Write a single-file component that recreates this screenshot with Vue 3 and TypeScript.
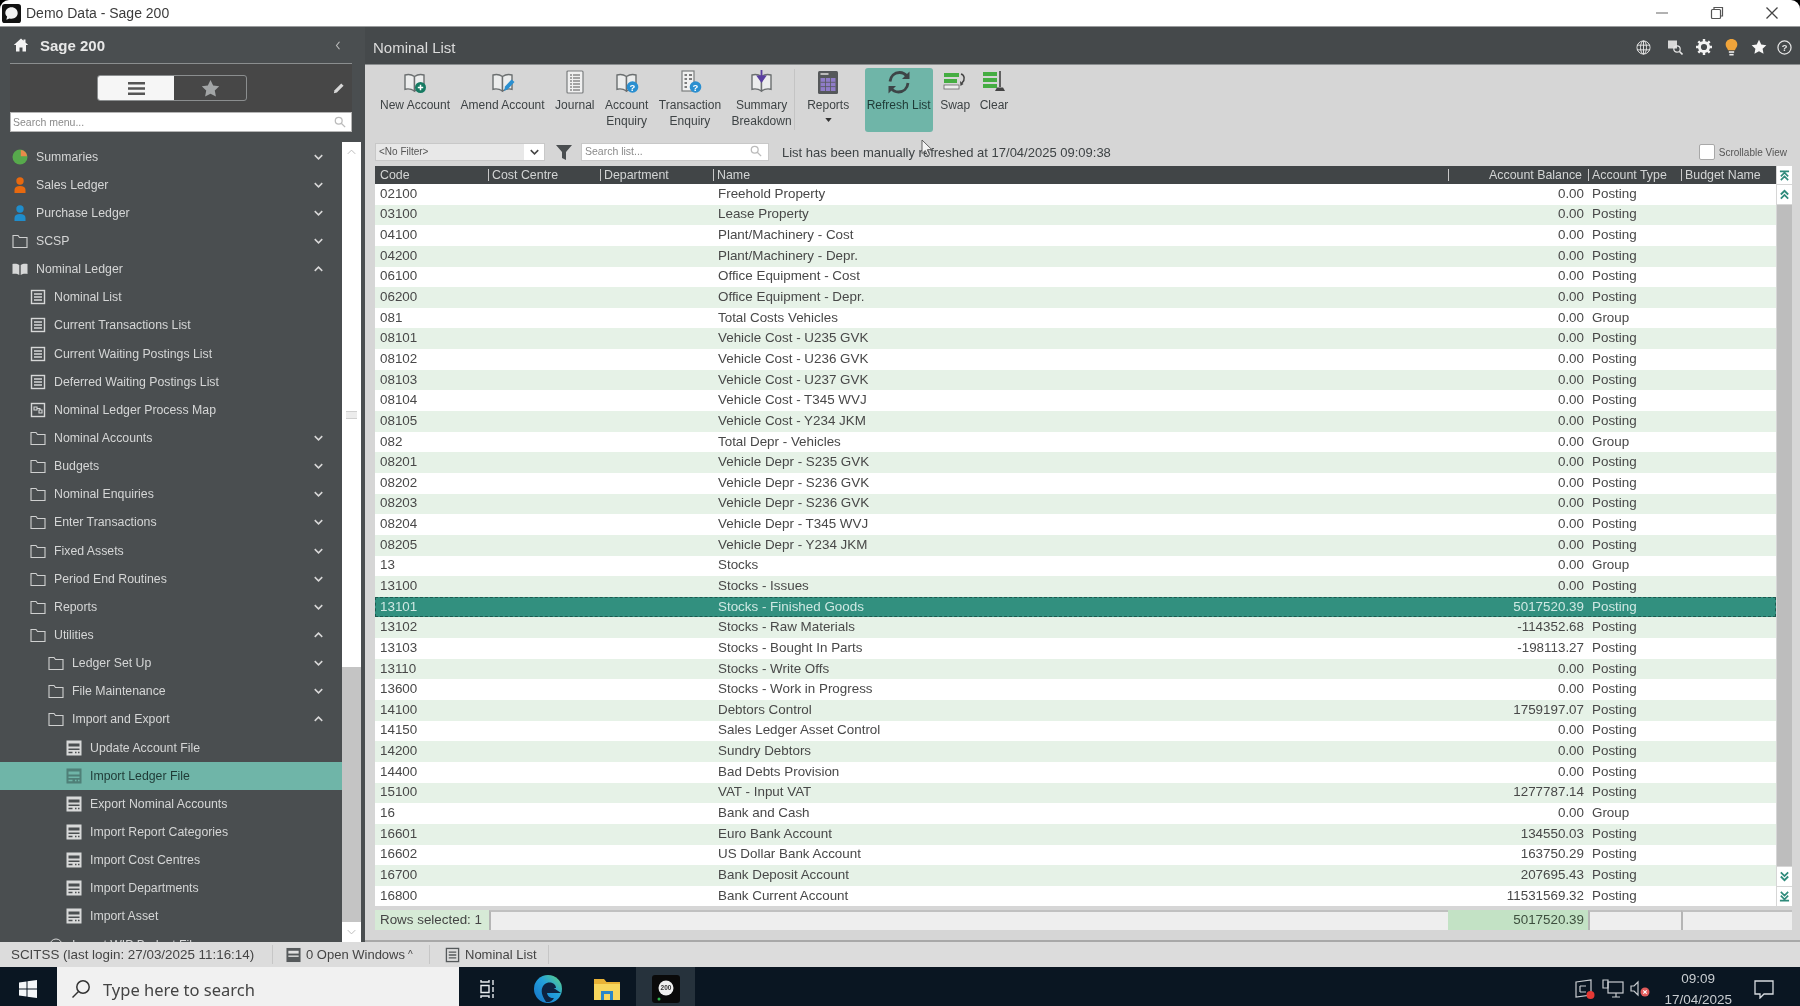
<script setup lang="ts">
// Sage 200 - Nominal List desktop window
type MenuIcon = "pie" | "sales" | "purchase" | "folder" | "book" | "doc" | "form" | "map" | "round"
interface MenuItem {
  label: string
  level: number
  icon: MenuIcon
  arrow?: "up" | "down"
  active?: boolean
}
interface Account {
  code: string
  name: string
  balance?: string
  type?: string
}

const menu: MenuItem[] = [
  { label: "Summaries", level: 0, icon: "pie", arrow: "down" },
  { label: "Sales Ledger", level: 0, icon: "sales", arrow: "down" },
  { label: "Purchase Ledger", level: 0, icon: "purchase", arrow: "down" },
  { label: "SCSP", level: 0, icon: "folder", arrow: "down" },
  { label: "Nominal Ledger", level: 0, icon: "book", arrow: "up" },
  { label: "Nominal List", level: 1, icon: "doc" },
  { label: "Current Transactions List", level: 1, icon: "doc" },
  { label: "Current Waiting Postings List", level: 1, icon: "doc" },
  { label: "Deferred Waiting Postings List", level: 1, icon: "doc" },
  { label: "Nominal Ledger Process Map", level: 1, icon: "map" },
  { label: "Nominal Accounts", level: 1, icon: "folder", arrow: "down" },
  { label: "Budgets", level: 1, icon: "folder", arrow: "down" },
  { label: "Nominal Enquiries", level: 1, icon: "folder", arrow: "down" },
  { label: "Enter Transactions", level: 1, icon: "folder", arrow: "down" },
  { label: "Fixed Assets", level: 1, icon: "folder", arrow: "down" },
  { label: "Period End Routines", level: 1, icon: "folder", arrow: "down" },
  { label: "Reports", level: 1, icon: "folder", arrow: "down" },
  { label: "Utilities", level: 1, icon: "folder", arrow: "up" },
  { label: "Ledger Set Up", level: 2, icon: "folder", arrow: "down" },
  { label: "File Maintenance", level: 2, icon: "folder", arrow: "down" },
  { label: "Import and Export", level: 2, icon: "folder", arrow: "up" },
  { label: "Update Account File", level: 3, icon: "form" },
  { label: "Import Ledger File", level: 3, icon: "form", active: true },
  { label: "Export Nominal Accounts", level: 3, icon: "form" },
  { label: "Import Report Categories", level: 3, icon: "form" },
  { label: "Import Cost Centres", level: 3, icon: "form" },
  { label: "Import Departments", level: 3, icon: "form" },
  { label: "Import Asset", level: 3, icon: "form" },
  // only the top of this one shows above the status bar
  { label: "Import WIP Budget File", level: 2, icon: "round" },
]

const tools = [
  { id: "new", lines: ["New Account"] },
  { id: "amend", lines: ["Amend Account"] },
  { id: "journal", lines: ["Journal"] },
  { id: "accEnq", lines: ["Account", "Enquiry"] },
  { id: "trnEnq", lines: ["Transaction", "Enquiry"] },
  { id: "summary", lines: ["Summary", "Breakdown"] },
  { id: "reports", lines: ["Reports"] },
  { id: "refresh", lines: ["Refresh List"] },
  { id: "swap", lines: ["Swap"] },
  { id: "clear", lines: ["Clear"] },
]

const columns = [
  { label: "Code" },
  { label: "Cost Centre" },
  { label: "Department" },
  { label: "Name" },
  { label: "Account Balance", right: true },
  { label: "Account Type" },
  { label: "Budget Name" },
]

const accounts: Account[] = [
  { code: "02100", name: "Freehold Property" },
  { code: "03100", name: "Lease Property" },
  { code: "04100", name: "Plant/Machinery - Cost" },
  { code: "04200", name: "Plant/Machinery - Depr." },
  { code: "06100", name: "Office Equipment - Cost" },
  { code: "06200", name: "Office Equipment - Depr." },
  { code: "081", name: "Total Costs Vehicles", type: "Group" },
  { code: "08101", name: "Vehicle Cost - U235 GVK" },
  { code: "08102", name: "Vehicle Cost - U236 GVK" },
  { code: "08103", name: "Vehicle Cost - U237 GVK" },
  { code: "08104", name: "Vehicle Cost - T345 WVJ" },
  { code: "08105", name: "Vehicle Cost - Y234 JKM" },
  { code: "082", name: "Total Depr - Vehicles", type: "Group" },
  { code: "08201", name: "Vehicle Depr - S235 GVK" },
  { code: "08202", name: "Vehicle Depr - S236 GVK" },
  { code: "08203", name: "Vehicle Depr - S236 GVK" },
  { code: "08204", name: "Vehicle Depr - T345 WVJ" },
  { code: "08205", name: "Vehicle Depr - Y234 JKM" },
  { code: "13", name: "Stocks", type: "Group" },
  { code: "13100", name: "Stocks - Issues" },
  { code: "13101", name: "Stocks - Finished Goods", balance: "5017520.39" },
  { code: "13102", name: "Stocks - Raw Materials", balance: "-114352.68" },
  { code: "13103", name: "Stocks - Bought In Parts", balance: "-198113.27" },
  { code: "13110", name: "Stocks - Write Offs" },
  { code: "13600", name: "Stocks - Work in Progress" },
  { code: "14100", name: "Debtors Control", balance: "1759197.07" },
  { code: "14150", name: "Sales Ledger Asset Control" },
  { code: "14200", name: "Sundry Debtors" },
  { code: "14400", name: "Bad Debts Provision" },
  { code: "15100", name: "VAT - Input VAT", balance: "1277787.14" },
  { code: "16", name: "Bank and Cash", type: "Group" },
  { code: "16601", name: "Euro Bank Account", balance: "134550.03" },
  { code: "16602", name: "US Dollar Bank Account", balance: "163750.29" },
  { code: "16700", name: "Bank Deposit Account", balance: "207695.43" },
  { code: "16800", name: "Bank Current Account", balance: "11531569.32" },
]
</script>

<template>
  <div class="app">
    <div class="titlebar">
      <svg class="app-logo" viewBox="0 0 20 20">
        <rect width="20" height="20" rx="3" fill="#111" />
        <path d="M10 3.500c3.800 0 6.500 2.600 6.500 6s-2.700 6-6.500 6c-.8 0-1.500-.1-2.200-.3L4.600 16.500l.8-3.300C4 12.100 3.500 10.800 3.500 9.500c0-3.400 2.700-6 6.500-6z" fill="#f2f2f2" />
      </svg>
      <span class="title-text">Demo Data - Sage 200</span>
      <div class="win-controls">
        <svg viewBox="0 0 14 14" width="14" height="14"><path d="M1 7h12" stroke="#999" stroke-width="1.500" /></svg>
        <svg viewBox="0 0 14 14" width="14" height="14" fill="none" stroke="#555" stroke-width="1.200">
          <rect x="1.500" y="3.500" width="9" height="9" rx="1" />
          <path d="M4 3.500V1.500h8.500v8.500h-2" />
        </svg>
        <svg viewBox="0 0 14 14" width="14" height="14"><path d="M1.500 1.500l11 11M12.500 1.500l-11 11" stroke="#444" stroke-width="1.300" /></svg>
      </div>
    </div>

    <div class="main">
      <aside class="sidebar">
        <div class="side-head">
          <svg class="home" viewBox="0 0 16 16" width="16" height="16">
            <path d="M8 1.500L0.800 8h2.200v6.500h3.500v-4h3v4h3.500V8h2.200l-2.700-2.400V2.500h-2v1.300z" fill="#f4f4f4" />
          </svg>
          <span class="side-title">Sage 200</span>
          <svg class="collapse" viewBox="0 0 8 12" width="6" height="9"><path d="M6 1L2 6l4 5" fill="none" stroke="#bbb" stroke-width="1.500" /></svg>
        </div>
        <div class="side-tabs">
          <div class="tabs">
            <div class="tab tab-on">
              <svg viewBox="0 0 16 14" width="17" height="15"><path d="M0 2h16M0 7h16M0 12h16" stroke="#555" stroke-width="2.400" /></svg>
            </div>
            <div class="tab">
              <svg viewBox="0 0 20 20" width="19" height="19"><path d="M10 1l2.800 5.900 6.400.8-4.700 4.400 1.200 6.400L10 15.400l-5.700 3.100 1.200-6.400L.8 7.700l6.400-.8z" fill="#a2a5a6" /></svg>
            </div>
          </div>
          <svg class="pencil" viewBox="0 0 14 14" width="12" height="12"><path d="M1 13l.8-3.500L9.600 1.700l2.700 2.700-7.800 7.800z" fill="#d8d8d8" /></svg>
        </div>
        <div class="side-search">
          <span>Search menu...</span>
          <svg viewBox="0 0 14 14" width="12" height="12" fill="none" stroke="#bbb" stroke-width="1.500"><circle cx="5.500" cy="5.500" r="4" /><path d="M8.500 8.500l4.500 4.500" /></svg>
        </div>

        <div class="side-body">
          <ul class="menu">
            <li
              v-for="item in menu"
              :key="item.label"
              class="menu-row"
              :class="['lvl' + item.level, { 'menu-row--active': item.active }]"
            >
              <svg class="menu-icon" viewBox="0 0 16 16" width="16" height="16">
                <template v-if="item.icon === 'pie'">
                  <circle cx="8" cy="8" r="7.500" fill="#57a94c" />
                  <path d="M8.800 1v6.200H15C14.700 3.800 12.200 1.300 8.800 1z" fill="#e8894a" />
                </template>
                <template v-else-if="item.icon === 'sales' || item.icon === 'purchase'">
                  <g :fill="item.icon === 'sales' ? '#e8690f' : '#1f8dcc'">
                    <circle cx="8" cy="4" r="3.700" />
                    <path d="M2.500 16v-3c0-2.500 2-4 5.500-4s5.500 1.500 5.500 4v3z" />
                  </g>
                </template>
                <path v-else-if="item.icon === 'folder'" d="M1 14.500V2.500h5l1.500 2h7.500v10z" fill="none" stroke="#cfd0d0" stroke-width="1.100" />
                <g v-else-if="item.icon === 'book'" fill="#d6d7d7">
                  <path d="M.5 3c2.500-.7 5-.3 6.800 1v10c-1.800-1.200-4.300-1.600-6.800-1z" />
                  <path d="M15.500 3c-2.500-.7-5-.3-6.800 1v10c1.800-1.200 4.300-1.600 6.800-1z" />
                </g>
                <g v-else-if="item.icon === 'doc'">
                  <rect x="1.500" y="1.500" width="13" height="13" fill="none" stroke="#d6d7d7" stroke-width="1.400" />
                  <path d="M4 5h8M4 8h8M4 11h8" stroke="#d6d7d7" stroke-width="1.300" />
                </g>
                <g v-else-if="item.icon === 'map'">
                  <rect x="1.500" y="1.500" width="13" height="13" fill="none" stroke="#d6d7d7" stroke-width="1.400" />
                  <path d="M4 5h3v3H4zM9 8h3v3H9zM7 6.500h3v1.500" fill="none" stroke="#d6d7d7" stroke-width="1.100" />
                </g>
                <circle v-else-if="item.icon === 'round'" cx="8" cy="8" r="6" fill="none" stroke="#d6d7d7" />
                <g v-else>
                  <rect x="0.500" y="0.500" width="15" height="15" :fill="item.active ? '#4f7f77' : '#d8d9d9'" />
                  <rect x="2.500" y="3.500" width="11" height="3" :fill="item.active ? '#6fb5a8' : '#4a4e50'" />
                  <rect x="2.500" y="8.500" width="11" height="1.500" :fill="item.active ? '#6fb5a8' : '#4a4e50'" />
                  <path d="M2.500 12.500h4M9 12.500h1.500M12 12.500h1.500" :stroke="item.active ? '#6fb5a8' : '#4a4e50'" stroke-width="1.400" />
                </g>
              </svg>
              <span class="menu-label">{{ item.label }}</span>
              <svg v-if="item.arrow" class="menu-arrow" viewBox="0 0 12 8" width="9" height="6">
                <path :d="item.arrow === 'down' ? 'M1 1.500l5 5 5-5' : 'M1 6.500l5-5 5 5'" fill="none" stroke="#d8d8d8" stroke-width="2" />
              </svg>
            </li>
          </ul>
          <div class="side-scroll">
            <div class="ss-btn">
              <svg viewBox="0 0 12 8" width="9" height="6"><path d="M1 6.500l5-5 5 5" fill="none" stroke="#bbb" stroke-width="1.300" /></svg>
            </div>
            <div class="ss-thumb"><span class="ss-grip"></span></div>
            <div class="ss-track"></div>
            <div class="ss-btn">
              <svg viewBox="0 0 12 8" width="9" height="6"><path d="M1 1.500l5 5 5-5" fill="none" stroke="#bbb" stroke-width="1.300" /></svg>
            </div>
          </div>
        </div>
      </aside>

      <section class="content">
        <header class="content-head">
          <span class="content-title">Nominal List</span>
          <div class="head-icons">
            <svg class="ic-globe" viewBox="0 0 16 16" width="15" height="15" fill="none" stroke="#e6e6e6" stroke-width="1">
              <circle cx="8" cy="8" r="7" /><ellipse cx="8" cy="8" rx="3.200" ry="7" /><path d="M1 5.500h14M1 10.500h14M8 1v14" />
            </svg>
            <svg viewBox="0 0 16 16" width="16" height="16" fill="none" stroke="#e6e6e6" stroke-width="1.200">
              <rect x="1" y="1.500" width="9" height="8" fill="#d8d8d8" stroke="none" />
              <circle cx="10" cy="10" r="3.200" /><path d="M12.500 12.500l3 3" stroke-width="1.600" />
            </svg>
            <svg viewBox="0 0 16 16" width="16" height="16">
              <circle cx="8" cy="8" r="4.600" fill="none" stroke="#f2f2f2" stroke-width="3" />
              <path d="M8 0v3M8 13v3M0 8h3M13 8h3M2.300 2.300l2.100 2.100M11.600 11.600l2.100 2.100M2.300 13.700l2.100-2.100M11.600 4.400l2.100-2.100" stroke="#f2f2f2" stroke-width="2.400" />
            </svg>
            <svg viewBox="0 0 12 16" width="13" height="17">
              <path d="M6 0C2.700 0 .5 2.300.5 5.200c0 2.400 1.600 3.500 2.300 5.300h6.400c.7-1.800 2.300-2.900 2.300-5.300C11.500 2.300 9.300 0 6 0z" fill="#f0a43a" />
              <rect x="3.500" y="11.500" width="5" height="1.500" fill="#eee" /><rect x="4" y="14" width="4" height="1.500" fill="#eee" />
            </svg>
            <svg viewBox="0 0 20 20" width="16" height="16"><path d="M10 1l2.800 5.900 6.400.8-4.700 4.400 1.200 6.400L10 15.400l-5.700 3.100 1.200-6.400L.8 7.700l6.400-.8z" fill="#f6f6f6" /></svg>
            <svg class="ic-help" viewBox="0 0 16 16" width="15" height="15">
              <circle cx="8" cy="8" r="7" fill="none" stroke="#e6e6e6" stroke-width="1.300" />
              <text x="8" y="11.600" font-size="10" font-family="Liberation Sans, sans-serif" font-weight="700" text-anchor="middle" fill="#e6e6e6">?</text>
            </svg>
          </div>
        </header>

        <div class="panel">
          <div class="toolbar">
            <div
              v-for="t in tools"
              :key="t.id"
              class="tool"
              :class="['tool-' + t.id, { 'tool--on': t.id === 'refresh' }]"
            >
              <svg class="tool-icon" viewBox="0 0 24 24" width="24" height="24">
                <template v-if="t.id === 'new' || t.id === 'amend' || t.id === 'accEnq' || t.id === 'summary'">
                  <path d="M2 5c3-1 6.500-.6 9.500 1.500V21C8.500 19 5 18.500 2 19.300z" fill="#eceded" stroke="#6b6f70" stroke-width="1.400" />
                  <path d="M21 5c-3-1-6.500-.6-9.500 1.500V21c3-2 6.500-2.500 9.500-1.700z" fill="#eceded" stroke="#6b6f70" stroke-width="1.400" />
                </template>
                <template v-if="t.id === 'new'">
                  <circle cx="17.500" cy="17.500" r="5.500" fill="#167a62" />
                  <path d="M14.800 17.500h5.400M17.500 14.800v5.400" stroke="#fff" stroke-width="1.500" />
                </template>
                <path v-if="t.id === 'amend'" d="M13 21l1-4.500 6.500-7 3 2.500-6.500 7z" fill="#2a8fd0" />
                <template v-if="t.id === 'journal'">
                  <rect x="4" y="1" width="16" height="22" rx="1" fill="#f0f0f0" stroke="#7a7d7e" stroke-width="1.200" />
                  <path d="M7 5h10M7 8h10M7 11h10M7 14h10M7 17h10M7 20h10" stroke="#555" stroke-width="1.200" />
                  <path d="M9.500 3v19" stroke="#f0f0f0" stroke-width="1" />
                </template>
                <template v-if="t.id === 'accEnq' || t.id === 'trnEnq'">
                  <rect v-if="t.id === 'trnEnq'" x="4" y="1" width="12" height="20" fill="#f0f0f0" stroke="#7a7d7e" stroke-width="1.200" />
                  <path v-if="t.id === 'trnEnq'" d="M6.500 5h2.500M11 5h3M6.500 9h2.500M11 9h3M6.500 13h2.500M6.500 17h2.500" stroke="#555" stroke-width="1.400" />
                  <circle cx="17.500" cy="17" r="5.800" fill="#2a8fd0" />
                  <text x="17.500" y="20.500" font-size="9.500" font-family="Liberation Sans, sans-serif" font-weight="700" text-anchor="middle" fill="#fff">?</text>
                </template>
                <path v-if="t.id === 'summary'" d="M11.500 0v9M8 6.500l3.500 5 3.500-5z" fill="#5a3fa0" stroke="#5a3fa0" stroke-width="1.800" />
                <template v-if="t.id === 'reports'">
                  <rect x="2" y="1" width="20" height="23" rx="1.500" fill="#55585a" />
                  <rect x="4.500" y="3" width="8" height="2" fill="#bbb" />
                  <rect x="4.500" y="8" width="15" height="13" fill="#8f7cc8" />
                  <path d="M4.500 12.300h15M4.500 16.600h15M9.500 8v13M14.500 8v13" stroke="#55585a" stroke-width=".8" />
                </template>
                <template v-if="t.id === 'refresh'">
                  <path d="M3 11.500C3.600 6 7.500 2.500 12.500 2.500c3.300 0 5.800 1.500 7.500 4" fill="none" stroke="#3d4547" stroke-width="2.800" />
                  <path d="M22.500 1.500v7.500H15z" fill="#3d4547" />
                  <path d="M21 13c-.6 5.500-4.500 9-9.500 9-3.300 0-5.800-1.500-7.500-4" fill="none" stroke="#3d4547" stroke-width="2.800" />
                  <path d="M1.500 23.500v-7.500H9z" fill="#3d4547" />
                </template>
                <template v-if="t.id === 'swap'">
                  <rect x="1" y="3" width="15" height="4" fill="#45ad42" />
                  <rect x="1" y="9" width="13" height="4" fill="#45ad42" />
                  <rect x="1" y="15" width="15" height="4" fill="#eee" stroke="#666" stroke-width=".8" />
                  <path d="M18 4c3.500 1 4.500 5.500 1 9" fill="none" stroke="#444" stroke-width="1.500" />
                  <path d="M17 11l3.500 3-3 2z" fill="#444" />
                </template>
                <template v-if="t.id === 'clear'">
                  <rect x="1" y="2" width="14" height="4" fill="#45ad42" />
                  <rect x="1" y="8" width="14" height="4" fill="#45ad42" />
                  <rect x="1" y="14" width="14" height="4" fill="#45ad42" />
                  <path d="M18 1v16" stroke="#444" stroke-width="1.600" />
                  <path d="M13 21l2-3.500h6l2 3.500z" fill="#444" />
                </template>
              </svg>
              <span v-for="l in t.lines" :key="l" class="tool-line">{{ l }}</span>
              <svg v-if="t.id === 'reports'" class="tool-caret" viewBox="0 0 8 5" width="7" height="4"><path d="M0 0h8L4 5z" fill="#333" /></svg>
            </div>
          </div>

          <div class="filter-row">
            <div class="filter-select">
              <span class="filter-value">&lt;No Filter&gt;</span>
              <span class="filter-arrow">
                <svg viewBox="0 0 12 8" width="9" height="6"><path d="M1 1.500l5 5 5-5" fill="none" stroke="#444" stroke-width="2" /></svg>
              </span>
            </div>
            <svg class="funnel" viewBox="0 0 16 16" width="16" height="16"><path d="M0 1h16l-6 7v8l-4-2V8z" fill="#4a4e50" /></svg>
            <div class="list-search">
              <span>Search list...</span>
              <svg viewBox="0 0 14 14" width="12" height="12" fill="none" stroke="#bbb" stroke-width="1.500"><circle cx="5.500" cy="5.500" r="4" /><path d="M8.500 8.500l4.500 4.500" /></svg>
            </div>
            <span class="refresh-msg">List has been manually refreshed at 17/04/2025 09:09:38</span>
            <label class="scrollable">
              <span class="check"></span>
              <span>Scrollable View</span>
            </label>
          </div>

          <div class="grid-wrap">
            <div class="grid">
              <div class="grid-head">
                <div
                  v-for="(c, i) in columns"
                  :key="c.label"
                  class="hcell"
                  :class="{ 'hcell--right': c.right, 'hcell--first': i === 0 }"
                >
                  {{ c.label }}
                </div>
              </div>
              <div
                v-for="(a, i) in accounts"
                :key="a.code"
                class="grid-row"
                :class="{ 'grid-row--alt': i % 2 === 1, 'grid-row--sel': a.code === '13101' }"
              >
                <div class="cell cell-code">{{ a.code }}</div>
                <div class="cell"></div>
                <div class="cell"></div>
                <div class="cell cell-name">{{ a.name }}</div>
                <div class="cell cell-bal">{{ a.balance ?? '0.00' }}</div>
                <div class="cell cell-type">{{ a.type ?? 'Posting' }}</div>
                <div class="cell"></div>
              </div>
            </div>
            <div class="grid-scroll">
              <div class="gs-btn gs-btn--head">
                <svg viewBox="0 0 12 12" width="11" height="11" fill="none" stroke="#2f8b7b" stroke-width="1.800"><path d="M1 1.500h10M2 7l4-4 4 4M2 11l4-4 4 4" /></svg>
              </div>
              <div class="gs-btn">
                <svg viewBox="0 0 12 12" width="11" height="11" fill="none" stroke="#2f8b7b" stroke-width="2"><path d="M2 6l4-4 4 4M2 10.500l4-4 4 4" /></svg>
              </div>
              <div class="gs-track"></div>
              <div class="gs-btn">
                <svg viewBox="0 0 12 12" width="11" height="11" fill="none" stroke="#2f8b7b" stroke-width="2"><path d="M2 1.500l4 4 4-4M2 6l4 4 4-4" /></svg>
              </div>
              <div class="gs-btn">
                <svg viewBox="0 0 12 12" width="11" height="11" fill="none" stroke="#2f8b7b" stroke-width="1.800"><path d="M2 1l4 4 4-4M2 5l4 4 4-4M1 10.500h10" /></svg>
              </div>
            </div>
          </div>

          <div class="totals">
            <div class="tot tot-label">Rows selected: 1</div>
            <div class="tot tot-fill"></div>
            <div class="tot tot-sum">5017520.39</div>
            <div class="tot tot-a"></div>
            <div class="tot tot-b"></div>
          </div>

          <!-- mouse pointer captured over the toolbar -->
          <svg class="pointer" viewBox="0 0 11 18" width="11" height="18">
            <path d="M1 1v13.500l3.300-3 2.300 5.200 2-.9-2.300-5.100 4.400-.2z" fill="#f4f4f4" stroke="#555" stroke-width=".9" />
          </svg>
        </div>
      </section>
    </div>

    <footer class="statusbar">
      <span class="st-item st-user">SCITSS (last login: 27/03/2025 11:16:14)</span>
      <span class="st-item st-windows">
        <svg viewBox="0 0 16 16" width="15" height="16">
          <rect x="0.500" y="0.500" width="15" height="15" fill="#55595b" />
          <rect x="2.500" y="3.500" width="11" height="3" fill="#e0e0e0" /><rect x="2.500" y="8.500" width="11" height="1.500" fill="#e0e0e0" />
        </svg>
        0 Open Windows <sup>^</sup>
      </span>
      <span class="st-item st-list">
        <svg viewBox="0 0 16 16" width="15" height="16" fill="none" stroke="#55595b" stroke-width="1.400">
          <rect x="1.500" y="1" width="13" height="14" /><path d="M4 5h8M4 8h8M4 11h8" />
        </svg>
        Nominal List
      </span>
    </footer>

    <div class="taskbar">
      <div class="start">
        <svg viewBox="0 0 18 18" width="18" height="18"><path d="M0 2.500L7.500 1.400v7.100H0zM8.500 1.300L18 0v8.500H8.500zM0 9.500h7.500v7.100L0 15.500zM8.500 9.500H18V18l-9.500-1.300z" fill="#f4f6f8" /></svg>
      </div>
      <div class="task-search">
        <svg viewBox="0 0 20 20" width="20" height="20" fill="none" stroke="#333" stroke-width="1.500"><circle cx="12" cy="8" r="6.200" /><path d="M7.500 12.500L1.500 18.500" /></svg>
        <span>Type here to search</span>
      </div>
      <div class="task-apps">
        <div class="task-app">
          <svg viewBox="0 0 20 20" width="20" height="20" fill="none" stroke="#e8ecef" stroke-width="1.400"><path d="M2 1v2h8V1M2 6.500h8v7H2zM2 19v-2h8v2M14 1v5M14 8v5M14 15v4" /></svg>
        </div>
        <div class="task-app">
          <svg viewBox="0 0 30 30" width="30" height="30">
            <defs>
              <linearGradient id="edge-ring" x1="0" y1="1" x2="1" y2="0">
                <stop offset="0" stop-color="#1570c4" />
                <stop offset="0.55" stop-color="#23a0dc" />
                <stop offset="1" stop-color="#62d67c" />
              </linearGradient>
            </defs>
            <circle cx="15" cy="15" r="14" fill="url(#edge-ring)" />
            <path d="M28 19H14c.5 3.500 3.600 5.200 7 5.200-2 3-5 4.300-8 3.800C12 26 8 21 8.800 15.500 9.600 11 13 8.500 16.500 8.500c4 0 6.500 2.500 6.500 5.500H15c.5-1.200 1.500-2 2.800-2" fill="#0e2340" />
          </svg>
        </div>
        <div class="task-app">
          <svg viewBox="0 0 28 22" width="28" height="22">
            <path d="M1 1h10l2.500 3H27v18H1z" fill="#e8b236" />
            <rect x="1" y="6" width="26" height="16" fill="#f7d65d" />
            <rect x="8" y="13" width="12" height="9" fill="#2a86c8" />
            <rect x="11" y="16" width="6" height="6" fill="#f7d65d" />
          </svg>
        </div>
        <div class="task-app task-app--on">
          <svg viewBox="0 0 28 28" width="28" height="28">
            <rect width="28" height="28" rx="3" fill="#0a0a0a" />
            <circle cx="14" cy="13" r="7.500" fill="#f0f0f0" />
            <text x="14" y="15.300" font-size="6.500" font-family="Liberation Sans, sans-serif" font-weight="700" text-anchor="middle" fill="#333">200</text>
            <circle cx="7" cy="24" r="1.500" fill="#2fb34a" />
          </svg>
        </div>
      </div>
      <div class="tray">
        <svg class="tray-ic" viewBox="0 0 22 22" width="22" height="22" fill="none" stroke="#c8ccd0" stroke-width="1.200">
          <path d="M2 4l15-2v15L2 19z" /><path d="M6 8h6M6 14h6M6 8v6" />
          <circle cx="16.500" cy="17" r="4" fill="#e53935" stroke="none" />
        </svg>
        <svg class="tray-ic" viewBox="0 0 22 22" width="22" height="22" fill="none" stroke="#c8ccd0" stroke-width="1.200">
          <rect x="6" y="4" width="15" height="11" /><path d="M10 19h8M14 15v4M1 2h5v8H1z" />
        </svg>
        <svg class="tray-ic" viewBox="0 0 22 22" width="22" height="22" fill="none" stroke="#c8ccd0" stroke-width="1.200">
          <path d="M1 8h3l4-4v13l-4-4H1z" />
          <circle cx="15" cy="14" r="4.500" fill="#e25c5c" stroke="none" />
          <path d="M13.300 12.300l3.400 3.400M16.700 12.300l-3.400 3.400" stroke="#fff" />
        </svg>
        <div class="clock">
          <span>09:09</span>
          <span>17/04/2025</span>
        </div>
        <svg class="notify" viewBox="0 0 20 20" width="20" height="20" fill="none" stroke="#d8dce0" stroke-width="1.300">
          <path d="M1 2h18v13h-9l-4 4v-4H1z" />
        </svg>
      </div>
    </div>
  </div>
</template>

<style scoped>
.app {
  width: 1800px;
  height: 1006px;
  display: flex;
  flex-direction: column;
  overflow: hidden;
  font-family: "Liberation Sans", Arial, sans-serif;
  background: #000;
  /* the reference is a video still, everything in it is slightly soft */
  filter: blur(0.45px);
}

.titlebar {
  height: 27px;
  flex: none;
  display: flex;
  align-items: center;
  background: #fff;
  border-bottom: 1px solid #9a9c9d;
  border-radius: 9px 9px 0 0;
  box-sizing: border-box;
  padding-left: 2px;
}

.app-logo {
  width: 19px;
  height: 19px;
}

.title-text {
  margin-left: 5px;
  font-size: 14px;
  color: #3c3c3c;
}

.win-controls {
  margin-left: auto;
  display: flex;
  gap: 41px;
  padding-right: 21px;
}

.main {
  flex: 1;
  display: flex;
  min-height: 0;
}

.sidebar {
  width: 365px;
  flex: none;
  display: flex;
  flex-direction: column;
  background: #4a4e50;
  color: #d5d6d6;
}

.side-head {
  height: 37px;
  flex: none;
  margin: 0 13px 0 10px;
  box-sizing: border-box;
  display: flex;
  align-items: center;
  border-bottom: 1px solid #8b8e8f;
}

.home {
  margin-left: 3px;
}

.side-title {
  margin-left: 11px;
  font-size: 15px;
  font-weight: 700;
  color: #e8e8e8;
}

.collapse {
  margin-left: auto;
  margin-right: 11px;
}

.side-tabs {
  height: 48px;
  flex: none;
  margin: 0 13px 0 10px;
  display: flex;
  align-items: center;
  background: #474747;
}

.tabs {
  margin-left: 87px;
  display: flex;
  height: 26px;
  width: 150px;
  border: 1px solid #8b8e8f;
  border-radius: 3px;
  box-sizing: border-box;
}

.tab {
  flex: 1;
  display: flex;
  align-items: center;
  justify-content: center;
}

.tab-on {
  flex: none;
  width: 76px;
  background: #f6f6f6;
  border-radius: 2px 0 0 2px;
}

.pencil {
  margin-left: auto;
  margin-right: 7px;
}

.side-search {
  height: 20px;
  flex: none;
  margin: 0 13px 0 10px;
  padding: 0 5px 0 2px;
  box-sizing: border-box;
  display: flex;
  align-items: center;
  justify-content: space-between;
  background: #fff;
  border: 1px solid #b5b5b5;
  font-size: 10.500px;
  color: #8a8a8a;
}

.side-body {
  flex: 1;
  min-height: 0;
  margin-top: 9px;
  display: flex;
}

.menu {
  list-style: none;
  margin: 0;
  padding: 1.500px 0 0;
  width: 342px;
  flex: none;
  overflow: hidden;
}

.menu-row {
  height: 28.150px;
  box-sizing: border-box;
  display: flex;
  align-items: center;
  gap: 8px;
  padding-right: 19px;
  font-size: 12.300px;
}

.lvl0 { padding-left: 12px; }
.lvl1 { padding-left: 30px; }
.lvl2 { padding-left: 48px; }
.lvl3 { padding-left: 66px; }

.menu-row--active {
  background: #6fb5a8;
  color: #1f3a36;
}

.menu-icon {
  flex: none;
}

.menu-arrow {
  margin-left: auto;
}

.side-scroll {
  width: 19px;
  flex: none;
  display: flex;
  flex-direction: column;
  margin-top: 1px;
}

.ss-btn {
  height: 20px;
  flex: none;
  display: flex;
  align-items: center;
  justify-content: center;
  background: #fff;
}

.ss-thumb {
  height: 505px;
  flex: none;
  background: #fff;
  display: flex;
  align-items: center;
  justify-content: center;
}

.ss-grip {
  width: 11px;
  height: 6px;
  border-top: 1px solid #d0d0d0;
  border-bottom: 1px solid #d0d0d0;
  background: #ececec;
}

.ss-track {
  flex: 1;
  background: #c4c4c4;
}

.content {
  flex: 1;
  min-width: 0;
  display: flex;
  flex-direction: column;
}

.content-head {
  height: 37px;
  flex: none;
  box-sizing: border-box;
  display: flex;
  align-items: center;
  padding: 3px 8px 0 8px;
  background: #45494b;
}

.content-title {
  font-size: 15px;
  color: #dcdcdc;
}

.head-icons {
  margin-left: auto;
  display: flex;
  align-items: center;
  gap: 13px;
}

.ic-globe {
  margin-right: 3px;
}

.ic-help {
  margin-left: -3px;
}

.panel {
  flex: 1;
  position: relative;
  min-height: 0;
  box-sizing: border-box;
  padding: 3px 8px 0 10px;
  background: #d6d6d6;
  border-top: 1px solid #8b8e8f;
  border-bottom: 2px solid #a8a8a8;
  font-size: 13px;
  color: #444;
}

.toolbar {
  height: 64px;
  display: flex;
  align-items: stretch;
  gap: 10.500px;
  padding-left: 5px;
}

.tool {
  display: flex;
  flex-direction: column;
  align-items: center;
  padding-top: 2px;
  font-size: 12px;
  line-height: 16px;
  color: #3e4345;
  white-space: nowrap;
}

.tool-icon {
  margin-bottom: 3px;
  flex: none;
}

.tool-line {
  display: block;
}

.tool-caret {
  margin-top: 5px;
}

.tool-reports {
  margin-left: 5px;
  position: relative;
}

.tool-reports::before {
  content: "";
  position: absolute;
  left: -13px;
  top: 1px;
  bottom: 2px;
  width: 1px;
  background: #c4c4c4;
}

.tool-refresh {
  margin-left: 5px;
}

.tool-swap {
  margin-left: -3px;
}

.tool-clear {
  margin-left: -1px;
}

.tool--on {
  background: #6fb5a8;
  border-radius: 3px;
  padding: 2px 2px 0;
  color: #1f3a36;
  width: 68px;
  box-sizing: border-box;
}

.filter-row {
  height: 18px;
  margin-top: 11px;
  display: flex;
  align-items: center;
}

.filter-select {
  width: 170px;
  height: 18px;
  flex: none;
  box-sizing: border-box;
  display: flex;
  background: #e8e8e8;
  border: 1px solid #c8c8c8;
  font-size: 10px;
  color: #555;
}

.filter-value {
  flex: 1;
  padding-left: 3px;
  line-height: 15px;
}

.filter-arrow {
  width: 20px;
  background: #fff;
  display: flex;
  align-items: center;
  justify-content: center;
}

.funnel {
  margin-left: 11px;
}

.list-search {
  margin-left: 9px;
  width: 188px;
  height: 18px;
  flex: none;
  box-sizing: border-box;
  padding: 0 6px 2px 3px;
  display: flex;
  align-items: center;
  justify-content: space-between;
  background: #fff;
  border: 1px solid #c8c8c8;
  font-size: 10.500px;
  color: #8a8a8a;
}

.refresh-msg {
  margin-left: 13px;
  font-size: 13px;
  color: #3e4345;
}

.scrollable {
  margin-left: auto;
  display: flex;
  align-items: center;
  gap: 4px;
  font-size: 10px;
  color: #555;
  padding-right: 5px;
}

.check {
  width: 14px;
  height: 14px;
  background: #fff;
  border: 1px solid #a8a8a8;
  border-radius: 2px;
}

.grid-wrap {
  margin-top: 5px;
  display: flex;
  align-items: stretch;
}

.grid {
  width: 1401px;
  flex: none;
}

.grid-head,
.grid-row {
  display: grid;
  grid-template-columns: 113px 112px 113px 735px 140px 93px 95px;
}

.grid-head {
  height: 18px;
  background: #414547;
  color: #d3d5d5;
  font-size: 12.400px;
  line-height: 18px;
}

.hcell {
  padding-left: 4px;
  position: relative;
  white-space: nowrap;
}

.hcell::before {
  content: "";
  position: absolute;
  left: 0;
  top: 3px;
  bottom: 3px;
  width: 1px;
  background: #c8c8c8;
}

.hcell--first::before {
  display: none;
}

.hcell--first {
  padding-left: 5px;
}

.hcell--right {
  text-align: right;
  padding-right: 6px;
}

.grid-row {
  height: 20.650px;
  box-sizing: border-box;
  padding-bottom: 2px;
  align-items: center;
  background: #fff;
  font-size: 13.400px;
  color: #484848;
}

.grid-row--alt {
  background: #e6f2e7;
}

.grid-row--sel {
  background: #32907f;
  color: #cfe8e3;
  outline: 1px dashed #1c5a50;
  outline-offset: -1px;
}

.cell {
  padding-left: 4px;
  white-space: nowrap;
}

.cell-code {
  padding-left: 5px;
}

.cell-name {
  padding-left: 5px;
}

.cell-bal {
  text-align: right;
  padding-right: 4px;
}

.grid-scroll {
  width: 15px;
  flex: none;
  margin-left: 1px;
  display: flex;
  flex-direction: column;
  gap: 1px;
}

.gs-btn {
  height: 19px;
  flex: none;
  display: flex;
  align-items: center;
  justify-content: center;
  background: #fff;
}

.gs-btn--head {
  height: 18px;
}

.gs-track {
  flex: 1;
  background: #bdbdbd;
}

.totals {
  height: 20px;
  margin-top: 4px;
  width: 1417px;
  display: grid;
  grid-template-columns: 114px 959px 140px 93px 111px;
  font-size: 13.400px;
  line-height: 20px;
}

.tot {
  box-sizing: border-box;
  background: #eeeeee;
  border-left: 2px solid #b5b5b5;
  border-top: 2px solid #c0c0c0;
}

.tot-label {
  background: #d6ead6;
  border: none;
  padding-left: 5px;
  line-height: 20px;
  white-space: nowrap;
}

.tot-sum {
  background: #c3e2c5;
  border: none;
  text-align: right;
  padding-right: 4px;
  color: #3d4f3e;
}

.pointer {
  position: absolute;
  left: 556px;
  top: 74px;
}

.statusbar {
  height: 25px;
  flex: none;
  display: flex;
  align-items: center;
  background: #dcdcdc;
  font-size: 13px;
  color: #444;
  white-space: nowrap;
}

.st-item {
  height: 19px;
  display: flex;
  align-items: center;
  gap: 5px;
  box-sizing: border-box;
  border-right: 1px solid #c6c6c6;
}

.st-item sup {
  font-size: 10px;
  line-height: 0;
  margin-left: -2px;
}

.st-user {
  width: 273px;
  padding-left: 11px;
  font-size: 13.400px;
}

.st-windows {
  width: 157px;
  padding-left: 13px;
}

.st-list {
  width: 119px;
  padding-left: 15px;
}

/* the taskbar runs a few pixels off the bottom of the capture */
.taskbar {
  height: 39px;
  flex: none;
  display: flex;
  align-items: flex-start;
  background: #0a1622;
}

.start {
  width: 57px;
  height: 44px;
  display: flex;
  align-items: center;
  justify-content: center;
  padding-right: 2px;
  box-sizing: border-box;
}

.task-search {
  width: 402px;
  height: 44px;
  flex: none;
  box-sizing: border-box;
  padding-left: 14px;
  display: flex;
  align-items: center;
  gap: 12px;
  background: #f1f1f1;
  font-family: "Noto Sans", sans-serif;
  font-size: 16.500px;
  color: #444;
}

.task-apps {
  display: flex;
  height: 44px;
}

.task-app {
  width: 59px;
  display: flex;
  align-items: center;
  justify-content: center;
}

.task-app--on {
  background: #26323c;
}

.tray {
  margin-left: auto;
  height: 44px;
  display: flex;
  align-items: center;
  gap: 6px;
  padding-right: 26px;
  color: #c8ccd0;
}

.clock {
  display: flex;
  flex-direction: column;
  align-items: center;
  margin: 0 16px 0 6px;
  font-size: 13.500px;
  line-height: 21px;
}

.notify {
  flex: none;
}
</style>

<style>
html, body { background: #4a4e50; }
</style>
